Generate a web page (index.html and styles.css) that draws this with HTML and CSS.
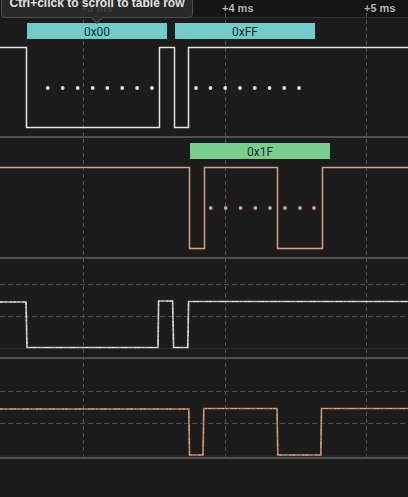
FILE: index.html
```html
<!DOCTYPE html>
<html>

<head>
  <meta charset="utf-8">
  <meta name="viewport" content="width=device-width">
  <title>Logic capture</title>

  <link rel="stylesheet" href="styles.css">
</head>

<body>
<main class="viewer">

  <header class="ruler">
    <span class="tick tick-3">+3 ms</span>
    <span class="tick tick-4">+4 ms</span>
    <span class="tick tick-5">+5 ms</span>
  </header>

  <!-- channel 1 : decoded bytes -->
  <section class="channel ch-digital">
    <svg width="408" height="118" viewBox="0 0 408 118">
      <rect class="frame-teal" x="27" y="5" width="140" height="16"/>
      <text class="frame-text" x="97" y="17.5">0x00</text>
      <rect class="frame-teal" x="175" y="5" width="140" height="16"/>
      <text class="frame-text" x="245" y="17.5">0xFF</text>

      <path class="wave-white" d="M0 29.5 H26.5 V109.5 H159.5 V29.5 H174.5 V109.5 H188.5 V29.5 H408"/>

      <g class="dots-white">
        <circle cx="47.7" cy="70" r="1.9"/><circle cx="62.7" cy="70" r="1.9"/>
        <circle cx="77.7" cy="70" r="1.9"/><circle cx="92.7" cy="70" r="1.9"/>
        <circle cx="107.3" cy="70" r="1.9"/><circle cx="122.2" cy="70" r="1.9"/>
        <circle cx="137.1" cy="70" r="1.9"/><circle cx="152" cy="70" r="1.9"/>
        <circle cx="196" cy="70" r="1.9"/><circle cx="210.5" cy="70" r="1.9"/>
        <circle cx="225.2" cy="70" r="1.9"/><circle cx="240" cy="70" r="1.9"/>
        <circle cx="254.8" cy="70" r="1.9"/><circle cx="269.5" cy="70" r="1.9"/>
        <circle cx="284.2" cy="70" r="1.9"/><circle cx="299" cy="70" r="1.9"/>
      </g>
    </svg>
  </section>

  <!-- channel 2 -->
  <section class="channel ch-digital-2">
    <svg width="408" height="119" viewBox="0 0 408 119">
      <rect class="frame-green" x="190" y="5" width="140" height="16"/>
      <text class="frame-text" x="260" y="17.5">0x1F</text>

      <path class="wave-peach" d="M0 29.5 H189.5 V110.5 H204.5 V29.5 H277.5 V110.5 H322.5 V29.5 H408"/>

      <g class="dots-peach">
        <circle cx="210.7" cy="70" r="1.9"/><circle cx="225.7" cy="70" r="1.9"/>
        <circle cx="240.6" cy="70" r="1.9"/><circle cx="255.3" cy="70" r="1.9"/>
        <circle cx="270" cy="70" r="1.9"/><circle cx="285" cy="70" r="1.9"/>
        <circle cx="300" cy="70" r="1.9"/><circle cx="314" cy="70" r="1.9"/>
      </g>
    </svg>
  </section>

  <!-- channel 3 : analog -->
  <section class="channel ch-analog">
    <svg width="408" height="98" viewBox="0 0 408 98">
      <line class="level" x1="0" y1="25.5" x2="408" y2="25.5"/>
      <line class="level" x1="0" y1="57.5" x2="408" y2="57.5"/>
      <line class="baseline" x1="0" y1="89.5" x2="408" y2="89.5"/>

      <path class="analog-white" d="M0 43 H26 L27 88.5 H158 L158.6 42 H172.6 L173.6 88.5 H187.8 L188.6 42.5 H408"/>
      <path class="analog-white-noise" d="M0 43 H26 L27 88.5 H158 L158.6 42 H172.6 L173.6 88.5 H187.8 L188.6 42.5 H408"/>
    </svg>
  </section>

  <!-- channel 4 : analog -->
  <section class="channel ch-analog">
    <svg width="408" height="98" viewBox="0 0 408 98">
      <line class="level" x1="0" y1="32.5" x2="408" y2="32.5"/>
      <line class="level" x1="0" y1="64.5" x2="408" y2="64.5"/>
      <line class="baseline" x1="0" y1="97" x2="408" y2="97"/>

      <path class="analog-peach" d="M0 50 H188.8 L189.5 96 H203 L203.8 49.5 H277 L277.8 96 H320.8 L321.5 49.5 H408"/>
      <path class="analog-peach-noise" d="M0 50 H188.8 L189.5 96 H203 L203.8 49.5 H277 L277.8 96 H320.8 L321.5 49.5 H408"/>
    </svg>
  </section>

  <svg class="grid" width="408" height="458" viewBox="0 0 408 458">
    <line x1="83.5" y1="13" x2="83.5" y2="457"/>
    <line x1="225.5" y1="13" x2="225.5" y2="457"/>
    <line x1="366.5" y1="13" x2="366.5" y2="457"/>
  </svg>

  <div class="tooltip">Ctrl+click to scroll to table row</div>

</main>
</body>

</html>
```

FILE: styles.css
```css
* {
  box-sizing: border-box;
}

body {
  margin: 0;
  padding: 0;
  background-color: #1c1c1c;
}

.viewer {
  position: relative;
  display: flex;
  flex-direction: column;
  width: 408px;
  height: 497px;
  overflow: hidden;
  background-color: #1c1c1c;
}

.ruler {
  position: relative;
  height: 18px;
  flex-shrink: 0;
  background-color: #151515;
  border-bottom: 1px solid #2f2f2f;
}

.tick {
  position: absolute;
  top: 2px;
  font-family: "Liberation Sans", Arial, sans-serif;
  font-size: 11px;
  font-weight: bold;
  color: #b8b8b8;
  text-shadow: 0 0 2px #000;
}

.tick-3 { left: 81px; }
.tick-4 { left: 222px; }
.tick-5 { left: 364px; }

.channel {
  position: relative;
  z-index: 1;
  flex-shrink: 0;
  border-bottom: 2px solid #515151;
}

.channel svg {
  display: block;
}

.ch-digital { height: 120px; }
.ch-digital-2 { height: 121px; }
.ch-analog { height: 100px; }

.frame-teal { fill: #72cbc8; }
.frame-green { fill: #7acd8e; }

.frame-text {
  font-family: Roboto, "Liberation Sans", sans-serif;
  font-size: 12px;
  fill: #1a302f;
  text-anchor: middle;
}

.wave-white {
  fill: none;
  stroke: #e4e4e4;
  stroke-width: 1.5;
}

.wave-peach {
  fill: none;
  stroke: #d9a085;
  stroke-width: 1.5;
}

.dots-white { fill: #e2e2e2; }
.dots-peach { fill: #d89d7f; }

.level {
  stroke: #505050;
  stroke-width: 1;
  stroke-dasharray: 5 3;
}

.baseline {
  stroke: #2c2c2c;
  stroke-width: 1;
}

.analog-white {
  fill: none;
  stroke: #bdbdbd;
  stroke-width: 1.7;
}

.analog-white-noise {
  fill: none;
  stroke: #efefef;
  stroke-width: 0.9;
  stroke-dasharray: 3 2 1 4 2 1;
}

.analog-peach {
  fill: none;
  stroke: #b98369;
  stroke-width: 1.7;
}

.analog-peach-noise {
  fill: none;
  stroke: #e4ae93;
  stroke-width: 0.9;
  stroke-dasharray: 3 2 1 4 2 1;
}

.grid {
  position: absolute;
  top: 0;
  left: 0;
  z-index: 0;
}

.grid line {
  stroke: #525252;
  stroke-width: 1;
  stroke-dasharray: 4 3;
}

.tooltip {
  position: absolute;
  z-index: 5;
  top: -10px;
  left: 1px;
  width: 192px;
  height: 28px;
  padding-top: 5px;
  text-align: center;
  font-family: "Liberation Sans", Arial, sans-serif;
  font-size: 12px;
  font-weight: bold;
  color: #e2e2e2;
  background-color: rgba(44, 44, 44, 0.86);
  border: 1px solid #4e4e4e;
  border-radius: 4px;
}

.tooltip::after {
  content: "";
  position: absolute;
  left: 91px;
  bottom: -5px;
  width: 7px;
  height: 7px;
  background-color: #2c2c2c;
  border-right: 1px solid #4e4e4e;
  border-bottom: 1px solid #4e4e4e;
  transform: rotate(45deg);
}
```
